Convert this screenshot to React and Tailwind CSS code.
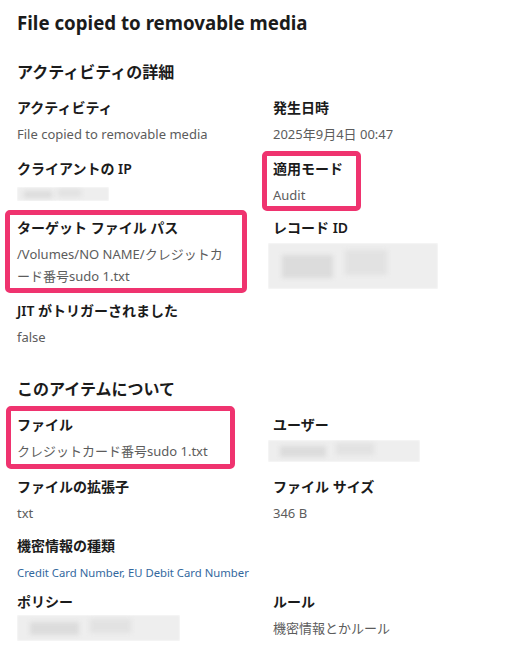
import React from "react";

const font = { fontFamily: '"Noto Sans", "Noto Sans CJK JP", sans-serif' };

function Blur({ className }) {
  return (
    <div className={"relative overflow-hidden " + className}>
      <div className="absolute inset-0 bg-[#eeeeee] blur-[1px]" />
      <div className="absolute left-[8%] top-[25%] h-[50%] w-[30%] bg-[#dcdcdc] blur-[2px]" />
      <div className="absolute left-[45%] top-[15%] h-[55%] w-[25%] bg-[#e2e2e2] blur-[2px]" />
    </div>
  );
}

function Mark({ className }) {
  return (
    <div
      className={
        "pointer-events-none absolute rounded-[5px] border-[5px] border-[#ef336f] " +
        className
      }
    />
  );
}

function Item({ label, children, mark, className = "" }) {
  return (
    <div className={"relative " + className}>
      {mark}
      <div className="text-[14px] font-semibold leading-[22px] text-[#1b1b1b]">
        {label}
      </div>
      <div className="mt-1 text-[13px] leading-[22px] text-[#5c5c5c]">
        {children}
      </div>
    </div>
  );
}

export default function App() {
  return (
    <div className="min-h-screen w-[527px] bg-white pl-[17px] pt-[9px]" style={font}>
      <h1 className="text-[18.7px] font-bold leading-[28px] text-[#1b1b1b]">
        File copied to removable media
      </h1>

      <h2 className="mt-[23px] text-[16px] font-semibold leading-[24px] text-[#1b1b1b]">
        アクティビティの詳細
      </h2>
      <div className="mt-[13px] grid grid-cols-[256px_1fr] gap-y-[13px]">
        <Item label="アクティビティ">File copied to removable media</Item>
        <Item label="発生日時">2025年9月4日 00:47</Item>

        <Item label="クライアントの IP">
          <Blur className="mt-[7px] h-[14px] w-[92px]" />
        </Item>
        <Item
          label="適用モード"
          mark={<Mark className="left-[-11px] top-[-7px] h-[60px] w-[99px]" />}
        >
          Audit
        </Item>

        <Item
          label="ターゲット ファイル パス"
          className="-mt-[2px]"
          mark={<Mark className="left-[-12px] top-[-7px] h-[83px] w-[242px]" />}
        >
          /Volumes/NO NAME/クレジットカ
          <br />
          ード番号sudo 1.txt
        </Item>
        <Item label="レコード ID" className="-mt-[2px]">
          <Blur className="-mb-[6px] -ml-[5px] mt-[2px] h-[46px] w-[170px]" />
        </Item>

        <Item label="JIT がトリガーされました">false</Item>
      </div>

      <h2 className="mt-[29px] text-[16px] font-semibold leading-[24px] text-[#1b1b1b]">
        このアイテムについて
      </h2>
      <div className="mt-[13px] grid grid-cols-[256px_1fr] gap-y-[12px]">
        <Item
          label="ファイル"
          mark={<Mark className="left-[-11px] top-[-8px] h-[63px] w-[229px]" />}
        >
          クレジットカード番号sudo 1.txt
        </Item>
        <Item label="ユーザー">
          <Blur className="-ml-[5px] mt-[0px] h-[22px] w-[152px]" />
        </Item>

        <Item label="ファイルの拡張子" className="mt-[2px]">txt</Item>
        <Item label="ファイル サイズ" className="mt-[2px]">346 B</Item>

        <Item label="機密情報の種類" className="col-span-2 -mt-[1px]">
          <span className="text-[11.3px] text-[#33689e]">
            Credit Card Number, EU Debit Card Number
          </span>
        </Item>

        <Item label="ポリシー" className="-mt-[5px]">
          <Blur className="mt-[-2px] h-[26px] w-[163px]" />
        </Item>
        <Item label="ルール" className="-mt-[5px]">機密情報とかルール</Item>
      </div>
    </div>
  );
}
